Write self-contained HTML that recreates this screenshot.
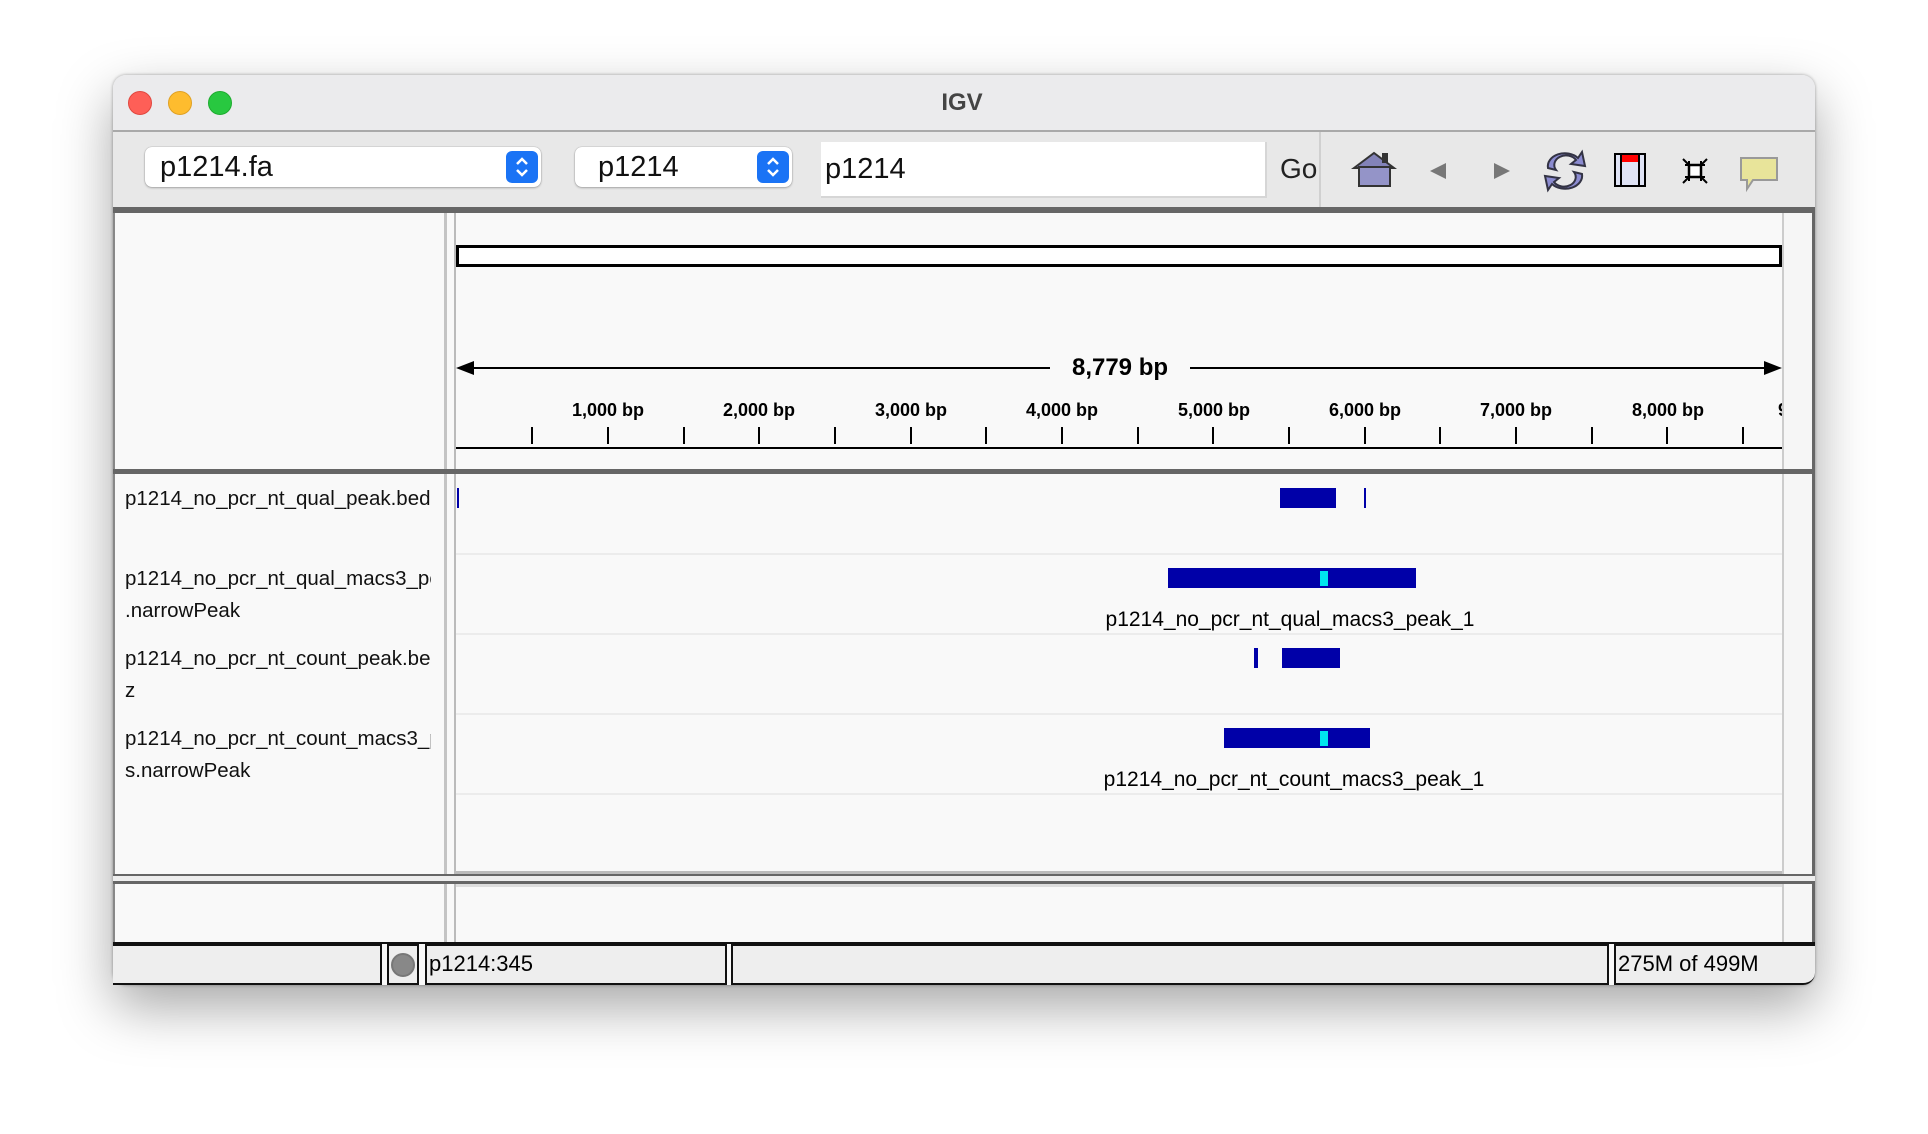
<!DOCTYPE html>
<html><head><meta charset="utf-8"><style>
*{margin:0;padding:0;box-sizing:border-box}
body{width:1928px;height:1134px;background:#fff;position:relative;overflow:hidden;font-family:"Liberation Sans",Arial,sans-serif}
.a{position:absolute}
.win{left:113px;top:75px;width:1702px;height:910px;border-radius:13px;background:#f9f9f9;box-shadow:0 0 3px rgba(0,0,0,.35),0 22px 55px rgba(0,0,0,.35);overflow:hidden}
.lbl{font-size:20.5px;color:#111;white-space:nowrap;left:12px}
.tk{width:2px;height:17px;background:#000;top:427px}
.rl{font-size:18px;font-weight:bold;top:400px;width:120px;text-align:center;margin-left:-60px;color:#000}
.sep{height:2px;background:#ececec;left:456px;width:1326px}
.blue{background:#0000a8}
.cyan{background:#00e5ee}
.combo{background:#fff;border-radius:7px;box-shadow:0 0 1px rgba(0,0,0,.4),0 1px 2px rgba(0,0,0,.25)}
.step{background:#1a73f5;border-radius:6px;width:32px;height:32px}
.sb{top:944px;height:41px;background:#eeeeee;border:2px solid #111;font-size:22px;line-height:36px;padding-left:2px}
</style></head><body>
<div class="a win"></div>
<div class="a" style="left:113px;top:75px;width:1702px;height:57px;background:#ebebed;border-radius:13px 13px 0 0;border-bottom:2px solid #a9a9a9"></div>
<div class="a" style="left:128px;top:91px;width:24px;height:24px;border-radius:50%;background:#fe5f57;border:1px solid #e1473f"></div>
<div class="a" style="left:168px;top:91px;width:24px;height:24px;border-radius:50%;background:#febc2e;border:1px solid #e0a123"></div>
<div class="a" style="left:208px;top:91px;width:24px;height:24px;border-radius:50%;background:#28c840;border:1px solid #1eac2f"></div>
<div class="a" style="left:900px;top:89px;width:124px;text-align:center;font-size:24px;font-weight:bold;color:#444">IGV</div>
<div class="a" style="left:113px;top:132px;width:1702px;height:76px;background:#e8e8e8"></div>
<div class="a" style="left:1319px;top:132px;width:2px;height:76px;background:#d0d0d0"></div>
<div class="a combo" style="left:145px;top:147px;width:396px;height:40px"></div>
<div class="a" style="left:160px;top:151px;font-size:29px;color:#111">p1214.fa</div>
<div class="a step" style="left:506px;top:151px"><svg width="32" height="32"><path d="M11 13l5-5 5 5M11 19l5 5 5-5" stroke="#fff" stroke-width="2.5" fill="none"/></svg></div>
<div class="a combo" style="left:575px;top:147px;width:217px;height:40px"></div>
<div class="a" style="left:598px;top:151px;font-size:29px;color:#111">p1214</div>
<div class="a step" style="left:757px;top:151px"><svg width="32" height="32"><path d="M11 13l5-5 5 5M11 19l5 5 5-5" stroke="#fff" stroke-width="2.5" fill="none"/></svg></div>
<div class="a" style="left:821px;top:142px;width:446px;height:56px;background:#fff;border-right:2px solid #d6d6d6;border-bottom:2px solid #d6d6d6"></div>
<div class="a" style="left:825px;top:153px;font-size:29px;color:#111">p1214</div>
<div class="a" style="left:1280px;top:153px;font-size:28px;color:#222">Go</div>
<svg class="a" style="left:1340px;top:140px" width="450" height="60">
<path d="M14 28L34 13L54 28Z" fill="#8383b8" stroke="#333" stroke-width="2"/>
<rect x="42" y="13" width="6" height="10" fill="#333"/>
<rect x="19" y="27" width="31" height="19" fill="#9494c8" stroke="#333" stroke-width="2"/>
<path d="M90 31l16-8v16z" fill="#777"/>
<path d="M170 31l-16-8v16z" fill="#777"/>
<path d="M208 28a17 13 0 0 1 30-10l4-6 3 14-14-2 5-4a11 9 0 0 0-20 10z" fill="#8b8bd0" stroke="#334" stroke-width="2"/>
<path d="M242 34a17 13 0 0 1-30 10l-4 6-3-14 14 2-5 4a11 9 0 0 0 20-10z" fill="#8b8bd0" stroke="#334" stroke-width="2"/>
<rect x="275" y="14" width="30" height="32" fill="#dfe3f5" stroke="#000" stroke-width="2"/>
<rect x="281" y="15" width="18" height="7" fill="#f00"/>
<line x1="281" y1="14" x2="281" y2="46" stroke="#000" stroke-width="2"/><line x1="299" y1="14" x2="299" y2="46" stroke="#000" stroke-width="2"/>
<rect x="349" y="25" width="12" height="12" fill="#fff" stroke="#000" stroke-width="2.5"/>
<path d="M343 19l6 6M343 43l6-6M367 19l-6 6M367 43l-6-6" stroke="#000" stroke-width="2"/>
<path d="M349 25l-4 0M349 25l0-4M361 25l4 0M361 25l0-4M349 37l-4 0M349 37l0 4M361 37l4 0M361 37l0 4" stroke="#000" stroke-width="2"/>
<path d="M401 18h36v22h-24l-6 9v-9h-6z" fill="#e8e49a" stroke="#999" stroke-width="2"/>
</svg>
<div class="a" style="left:113px;top:207px;width:1702px;height:6px;background:#666"></div>
<div class="a" style="left:444px;top:213px;width:3px;height:731px;background:#c4c4c4"></div>
<div class="a" style="left:454px;top:213px;width:2px;height:731px;background:#bbb"></div>
<div class="a" style="left:1782px;top:213px;width:2px;height:731px;background:#ccc"></div>
<div class="a" style="left:1784px;top:213px;width:31px;height:731px;background:#f6f6f6"></div>
<div class="a" style="left:1812px;top:213px;width:3px;height:731px;background:#666"></div>
<div class="a" style="left:113px;top:213px;width:2px;height:731px;background:#888"></div>
<div class="a" style="left:456px;top:245px;width:1326px;height:22px;background:#fff;border:3px solid #000"></div>
<div class="a" style="left:462px;top:367px;width:1314px;height:2px;background:#000"></div>
<svg class="a" style="left:456px;top:358px" width="1326" height="20"><path d="M0 10l18-7v14z" fill="#000"/><path d="M1326 10l-18-7v14z" fill="#000"/></svg>
<div class="a" style="left:1050px;top:354px;width:140px;height:28px;background:#f9f9f9;text-align:center;font-size:24px;font-weight:bold">8,779 bp</div>
<div class="a" style="left:456px;top:447px;width:1326px;height:2px;background:#000"></div>
<div class="a tk" style="left:531px"></div><div class="a tk" style="left:607px"></div><div class="a tk" style="left:683px"></div><div class="a tk" style="left:758px"></div><div class="a tk" style="left:834px"></div><div class="a tk" style="left:910px"></div><div class="a tk" style="left:985px"></div><div class="a tk" style="left:1061px"></div><div class="a tk" style="left:1137px"></div><div class="a tk" style="left:1212px"></div><div class="a tk" style="left:1288px"></div><div class="a tk" style="left:1364px"></div><div class="a tk" style="left:1439px"></div><div class="a tk" style="left:1515px"></div><div class="a tk" style="left:1591px"></div><div class="a tk" style="left:1666px"></div><div class="a tk" style="left:1742px"></div>
<div class="a rl" style="left:608px">1,000 bp</div><div class="a rl" style="left:759px">2,000 bp</div><div class="a rl" style="left:911px">3,000 bp</div><div class="a rl" style="left:1062px">4,000 bp</div><div class="a rl" style="left:1214px">5,000 bp</div><div class="a rl" style="left:1365px">6,000 bp</div><div class="a rl" style="left:1516px">7,000 bp</div><div class="a rl" style="left:1668px">8,000 bp</div>
<div class="a" style="left:1778px;top:400px;font-size:18px;font-weight:bold;width:4px;overflow:hidden">9</div>
<div class="a" style="left:113px;top:469px;width:1702px;height:5px;background:#666"></div>
<div class="a" style="left:113px;top:474px;width:318px;height:400px;overflow:hidden">
<div class="a lbl" style="top:13px">p1214_no_pcr_nt_qual_peak.bed</div>
<div class="a lbl" style="top:93px">p1214_no_pcr_nt_qual_macs3_peaks</div>
<div class="a lbl" style="top:125px">.narrowPeak</div>
<div class="a lbl" style="top:173px">p1214_no_pcr_nt_count_peak.bedz</div>
<div class="a lbl" style="top:205px">z</div>
<div class="a lbl" style="top:253px">p1214_no_pcr_nt_count_macs3_peak</div>
<div class="a lbl" style="top:285px">s.narrowPeak</div>
</div>
<div class="a sep" style="top:553px"></div><div class="a sep" style="top:633px"></div><div class="a sep" style="top:713px"></div><div class="a sep" style="top:793px"></div>
<div class="a blue" style="left:457px;top:488px;width:2px;height:20px"></div>
<div class="a blue" style="left:1280px;top:488px;width:56px;height:20px"></div>
<div class="a blue" style="left:1364px;top:488px;width:2px;height:20px"></div>
<div class="a blue" style="left:1168px;top:568px;width:248px;height:20px"></div>
<div class="a cyan" style="left:1320px;top:571px;width:8px;height:15px"></div>
<div class="a" style="left:1040px;top:608px;width:500px;text-align:center;font-size:21px">p1214_no_pcr_nt_qual_macs3_peak_1</div>
<div class="a blue" style="left:1254px;top:648px;width:4px;height:20px"></div>
<div class="a blue" style="left:1282px;top:648px;width:58px;height:20px"></div>
<div class="a blue" style="left:1224px;top:728px;width:146px;height:20px"></div>
<div class="a cyan" style="left:1320px;top:731px;width:8px;height:15px"></div>
<div class="a" style="left:1044px;top:768px;width:500px;text-align:center;font-size:21px">p1214_no_pcr_nt_count_macs3_peak_1</div>
<div class="a" style="left:456px;top:871px;width:1326px;height:3px;background:#bbb"></div>
<div class="a" style="left:113px;top:874px;width:1702px;height:2px;background:#666"></div>
<div class="a" style="left:113px;top:876px;width:1702px;height:5px;background:#eee"></div>
<div class="a" style="left:113px;top:881px;width:1702px;height:3px;background:#666"></div>
<div class="a" style="left:456px;top:884px;width:1326px;height:3px;background:#ddd"></div>
<div class="a" style="left:113px;top:942px;width:1702px;height:2px;background:#111"></div>
<div class="a sb" style="left:113px;width:269px;border-left:none"></div>
<div class="a sb" style="left:387px;width:32px"></div>
<div class="a" style="left:391px;top:953px;width:24px;height:24px;border-radius:50%;background:#888;border:2px solid #777"></div>
<div class="a sb" style="left:425px;width:302px">p1214:345</div>
<div class="a sb" style="left:731px;width:878px"></div>
<div class="a sb" style="left:1614px;width:201px;border-right:none;border-radius:0 0 12px 0">275M of 499M</div>
</body></html>
